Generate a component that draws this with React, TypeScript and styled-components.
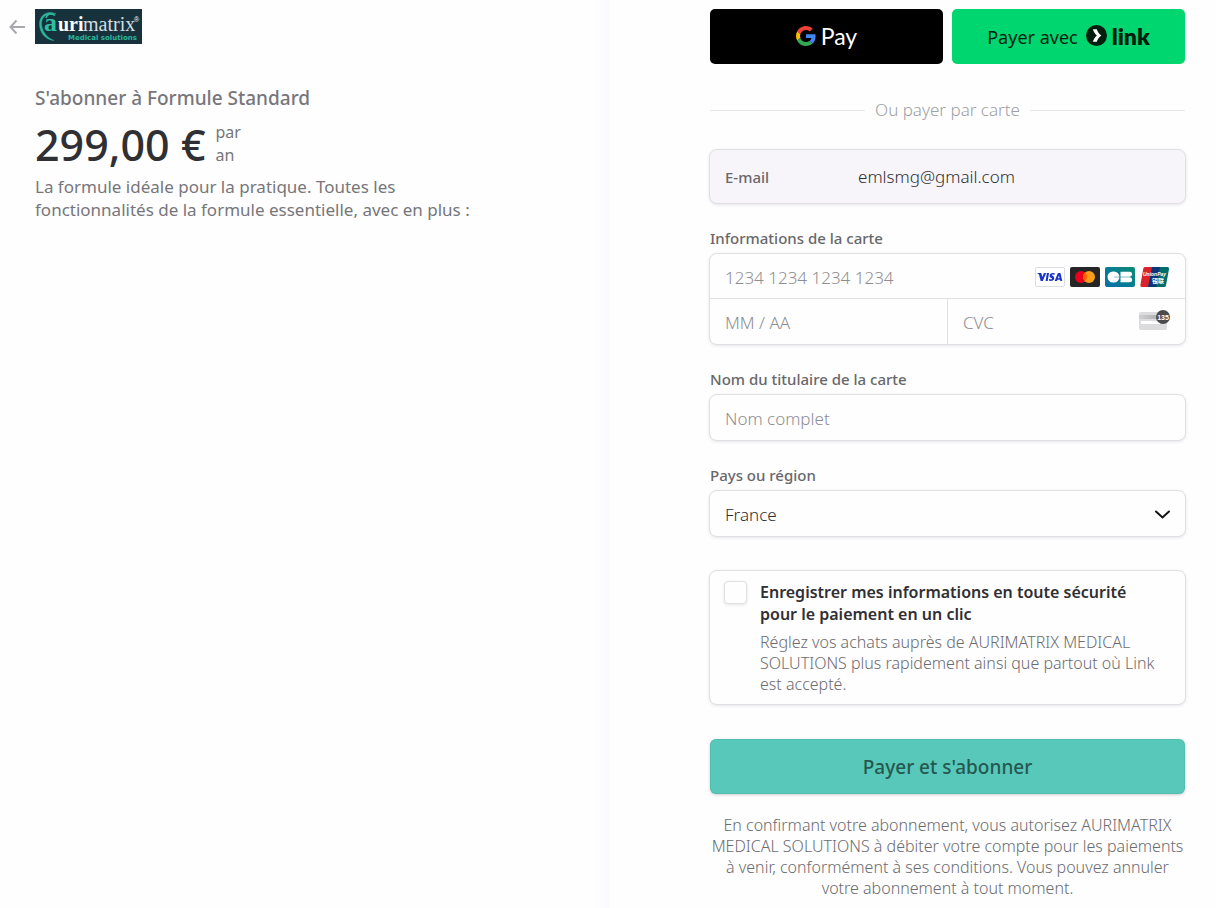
import React from "react";
import styled, { createGlobalStyle } from "styled-components";

const GlobalStyle = createGlobalStyle`
  *, *::before, *::after { box-sizing: border-box; }
  body {
    margin: 0;
    background: #fefefe;
    color: #302f33;
    font-family: "Noto Sans", "Open Sans", sans-serif;
    font-size: 16px;
  }
  button, input, select { font-family: inherit; font-size: inherit; color: inherit; }
  h1, p { margin: 0; }
`;

const Page = styled.div`
  display: flex;
  min-height: 100vh;
`;

const Summary = styled.section`
  width: calc(50% + 2px);
  padding: 9px 18px 9px 9px;
  background: linear-gradient(to left, #fbfafd, #fefefe 18px);
`;

const Header = styled.header`
  display: flex;
  align-items: center;
  gap: 10px;
`;

const BackLink = styled.a`
  display: flex;
`;

const Offer = styled.div`
  padding: 42px 0 0 26px;
  color: #77767b;
`;

const OfferTitle = styled.h1`
  font-size: 19px;
  line-height: 24px;
  font-weight: 500;
`;

const PriceRow = styled.div`
  display: flex;
  align-items: center;
  gap: 10px;
  margin-top: 10px;
`;

const Price = styled.span`
  color: #302f33;
  padding-top: 2px;
  font-size: 43px;
  line-height: 46px;
  font-weight: 500;
`;

const Interval = styled.span`
  width: 32px;
  font-size: 16px;
  line-height: 23px;
`;

const Description = styled.p`
  max-width: 450px;
  margin-top: 7px;
  font-size: 17px;
  line-height: 23px;
`;

const Payment = styled.main`
  flex: 1;
  min-width: 0;
  padding: 9px 30px 9px 99px;
`;

const Express = styled.div`
  display: flex;
  gap: 9px;
  padding: 0 1px;
`;

const ExpressButton = styled.button<{ $bg: string; $fg: string }>`
  flex: 1;
  display: flex;
  align-items: center;
  justify-content: center;
  gap: 8px;
  height: 55px;
  padding: 0;
  border: 0;
  border-radius: 5px;
  background: ${(p) => p.$bg};
  color: ${(p) => p.$fg};
  font-size: 18px;
`;

const Wordmark = styled.span<{ $weight: number; $size: number }>`
  font-family: Lato, sans-serif;
  font-size: ${(p) => p.$size}px;
  line-height: 24px;
  font-weight: ${(p) => p.$weight};
`;

const Brand = styled.span`
  display: flex;
  align-items: center;
  gap: 5px;
  padding-bottom: 2px;
`;

const Divider = styled.div`
  display: flex;
  align-items: center;
  gap: 10px;
  margin: 34px 1px 27px;
  color: #a09fa3;
  font-size: 17px;
  line-height: 24px;
  font-weight: 300;
  &::before, &::after {
    content: "";
    flex: 1;
    height: 1px;
    background: #e8e7ea;
  }
`;

const Box = styled.div<{ $filled?: boolean }>`
  border: 1px solid #e0dfe3;
  border-radius: 8px;
  background: ${(p) => (p.$filled ? "#f7f5f9" : "#fefefe")};
  box-shadow: 0 1px 3px rgba(60, 50, 80, 0.12);
`;

const EmailBox = styled(Box)`
  display: flex;
  align-items: center;
  height: 55px;
  padding: 0 15px;
`;

const EmailLabel = styled.label`
  width: 133px;
  color: #68676b;
  font-size: 15px;
  font-weight: 500;
`;

const TextInput = styled.input`
  flex: 1;
  min-width: 0;
  width: 100%;
  height: 100%;
  padding: 0;
  border: 0;
  background: transparent;
  outline: none;
  font-size: 17px;
  font-weight: 300;
  &::placeholder { color: #8e8d91; opacity: 1; }
`;

const Label = styled.label`
  display: block;
  margin: 24px 1px 5px;
  color: #68676b;
  font-size: 15px;
  line-height: 20px;
  font-weight: 500;
`;

const CardRow = styled.div`
  display: flex;
  height: 44px;
  & + & {
    height: 46px;
    border-top: 1px solid #e0dfe3;
  }
`;

const Cell = styled.div`
  flex: 1;
  display: flex;
  align-items: center;
  padding: 2px 15px 0;
  & + & { border-left: 1px solid #e0dfe3; }
`;

const Brands = styled.div`
  display: flex;
  gap: 5px;
`;

const Field = styled(Box)`
  position: relative;
  height: 47px;
  padding: 2px 15px 0;
`;

const Select = styled.select`
  width: 100%;
  height: 100%;
  padding: 0;
  border: 0;
  outline: none;
  appearance: none;
  background: transparent;
  font-size: 17px;
  font-weight: 300;
`;

const Chevron = styled.svg`
  position: absolute;
  right: 14px;
  top: 14px;
  pointer-events: none;
`;

const SaveBox = styled(Box)`
  display: flex;
  align-items: flex-start;
  gap: 13px;
  margin-top: 33px;
  padding: 10px 20px 9px 14px;
`;

const Checkbox = styled.input`
  flex: none;
  appearance: none;
  width: 23px;
  height: 23px;
  margin: 0;
  border: 1px solid #e0dfe3;
  border-radius: 4px;
  background: #fefefe;
  box-shadow: 0 1px 3px rgba(60, 50, 80, 0.12);
`;

const SaveText = styled.label`
  font-size: 16px;
  line-height: 22px;
  font-weight: 600;
`;

const SaveHint = styled.span`
  display: block;
  margin-top: 7px;
  color: #6c6b70;
  font-size: 16px;
  line-height: 21px;
  font-weight: 300;
`;

const Submit = styled.button`
  display: block;
  width: calc(100% - 2px);
  height: 55px;
  margin: 34px 1px 21px;
  border: 0;
  border-radius: 6px;
  background: #57c8b9;
  color: #25584f;
  font-size: 19px;
  font-weight: 500;
  box-shadow: inset 0 0 0 1px rgba(40, 120, 110, 0.12), 0 1px 3px rgba(60, 50, 80, 0.25);
`;

const Terms = styled.p`
  color: #6c6b70;
  font-size: 16px;
  line-height: 21px;
  font-weight: 300;
  text-align: center;
`;

const BrandLogo = () => (
  <svg width="107" height="35" viewBox="0 0 107 35" role="img" aria-label="Aurimatrix Medical solutions">
    <rect width="107" height="35" fill="#17323d" />
    <path d="M21 5C14 1 5 5 4.500 14C4 23 10 31 19 31.500C12 29 6.500 22 6.500 14C7 7 13 3.500 21 5Z" fill="#2bb59a" stroke="#2bb59a" strokeWidth=".4" />
    <text x="9" y="22" fontFamily="Liberation Serif, serif" fontWeight="700" fontSize="26" fill="#2fc0a3">a</text>
    <path d="M11 9C12 5 16 3.500 20 6.500" fill="none" stroke="#2fc0a3" strokeWidth="1.500" />
    <text x="23" y="22" fontFamily="Liberation Serif, serif" fontWeight="700" fontSize="20" fill="#ffffff">uri</text>
    <text x="48" y="22" fontFamily="Liberation Serif, serif" fontSize="20" fill="#d5dde0">matrix</text>
    <text x="99" y="13" fontFamily="Liberation Sans, sans-serif" fontSize="7" fill="#ffffff">®</text>
    <text x="33" y="31" fontFamily="DejaVu Sans, sans-serif" fontWeight="700" fontSize="7" fill="#2bb59a">Medical solutions</text>
  </svg>
);

const GoogleG = () => (
  <svg width="20" height="20" viewBox="0 0 48 48" aria-hidden="true">
    <path fill="#EA4335" d="M24 9.500c3.540 0 6.710 1.220 9.210 3.600l6.850-6.850C35.900 2.380 30.470 0 24 0 14.620 0 6.510 5.380 2.560 13.220l7.980 6.190C12.430 13.720 17.740 9.500 24 9.500z" />
    <path fill="#4285F4" d="M46.980 24.550c0-1.570-.15-3.090-.38-4.550H24v9.020h12.940c-.58 2.960-2.260 5.480-4.780 7.180l7.730 6c4.510-4.180 7.090-10.360 7.090-17.650z" />
    <path fill="#FBBC05" d="M10.530 28.590c-.48-1.450-.76-2.990-.76-4.590s.27-3.140.76-4.590l-7.980-6.190C.92 16.460 0 20.120 0 24c0 3.880.92 7.540 2.560 10.780l7.970-6.190z" />
    <path fill="#34A853" d="M24 48c6.480 0 11.930-2.130 15.890-5.810l-7.730-6c-2.150 1.450-4.920 2.300-8.160 2.300-6.260 0-11.570-4.220-13.470-9.910l-7.980 6.190C6.510 42.620 14.620 48 24 48z" />
  </svg>
);

const LinkMark = () => (
  <svg width="21" height="21" viewBox="0 0 21 21" aria-hidden="true">
    <circle cx="10.500" cy="10.500" r="10.500" fill="#011e0f" />
    <path d="M6.800 4.200h4c.7 2.500 2.300 4.800 4.600 6.300-2.300 1.500-3.900 3.800-4.600 6.300h-4c.8-2.600 2.300-4.800 4.100-6.300-1.800-1.500-3.300-3.700-4.100-6.300z" fill="#fefefe" />
  </svg>
);

const Visa = () => (
  <svg width="30" height="20" viewBox="0 0 30 20" role="img" aria-label="Visa">
    <rect x=".5" y=".5" width="29" height="19" rx="1.500" fill="#fff" stroke="#dcdce4" />
    <path fill="#1a34c8" d="M2.600 6h3.100c.5 0 .8.200.9.700l.6 3.300L9 6h2.200l-3.400 8H5.600L4 7.600c-.4-.6-.9-.9-1.500-1.100zM11.900 6h2.100l-1.300 8h-2.100zM19.700 6.300l-.3 1.700c-1.200-.6-2.600-.5-2.600.1 0 .8 2.500 1 2.500 3.100 0 2.600-3.200 3.300-5.400 2.400l.3-1.800c1.400.8 2.900.6 2.900 0 0-.9-2.500-.9-2.500-3.100 0-2.300 2.800-3.300 5.100-2.400zM23.500 6h1.900L27.300 14h-2l-.3-1.200h-2.600l-.5 1.200h-2.200l2.800-7.200c.2-.5.500-.8 1-.8zm.4 2.500-1 2.800h1.600z" />
  </svg>
);

const Mastercard = () => (
  <svg width="30" height="20" viewBox="0 0 30 20" role="img" aria-label="Mastercard">
    <rect width="30" height="20" rx="2" fill="#252525" />
    <circle cx="11" cy="10" r="6" fill="#eb001b" />
    <circle cx="19" cy="10" r="6" fill="#f79e1b" />
    <path d="M15 5.530a6 6 0 0 1 0 8.940 6 6 0 0 1 0-8.940z" fill="#ff5f00" />
  </svg>
);

const CartesBancaires = () => (
  <svg width="30" height="20" viewBox="0 0 30 20" role="img" aria-label="Cartes Bancaires">
    <defs>
      <linearGradient id="cb" x1="0" y1="1" x2="1" y2="0">
        <stop offset="0" stopColor="#0b6fa8" />
        <stop offset=".5" stopColor="#057d92" />
        <stop offset="1" stopColor="#108a72" />
      </linearGradient>
    </defs>
    <rect width="30" height="20" rx="2" fill="url(#cb)" />
    <path d="M14.500 9.700H9.200v.6h5.300A5.600 5.600 0 0 1 9 15.500H8a5.500 5.500 0 0 1 0-11H9a5.600 5.600 0 0 1 5.500 5.200z" fill="#fff" />
    <path d="M15.500 4.700h9.100a2.500 2.500 0 0 1 0 5h-9.100zM15.500 10.300h9.100a2.500 2.500 0 0 1 0 5h-9.100z" fill="#fff" />
  </svg>
);

const UnionPay = () => (
  <svg width="30" height="20" viewBox="0 0 30 20" role="img" aria-label="UnionPay">
    <path d="M5 0h8L9 20H2Q0 20 .4 18L3.300 1.500Q3.600 0 5 0z" fill="#d9222a" />
    <path d="M12 0h9l-4 20H8z" fill="#0c3479" />
    <path d="M20 0h7.500Q29.400 0 29 2l-3 16.500Q25.700 20 24 20h-8z" fill="#026c68" />
    <text x="3" y="9" fontFamily="Liberation Sans, sans-serif" fontStyle="italic" fontWeight="700" fontSize="5" fill="#fff">UnionPay</text>
    <text x="12" y="16" fontFamily="Noto Sans CJK SC, sans-serif" fontWeight="700" fontSize="6" fill="#fff">银联</text>
  </svg>
);

const CvcIcon = () => (
  <svg width="31" height="26" viewBox="0 0 31 26" aria-hidden="true">
    <defs>
      <linearGradient id="stripe" x1="0" y1="0" x2="1" y2="0">
        <stop offset="0" stopColor="#d0cfd1" />
        <stop offset="1" stopColor="#a09fa2" />
      </linearGradient>
    </defs>
    <rect x="0" y="2" width="28" height="18" rx="2" fill="#dcdbdd" />
    <rect x="0" y="5" width="28" height="4" fill="url(#stripe)" />
    <rect x="2" y="11" width="19" height="3" fill="#fff" />
    <circle cx="24" cy="7" r="7" fill="#4b4a4c" />
    <text x="24" y="10" textAnchor="middle" fontFamily="Liberation Sans, sans-serif" fontWeight="700" fontSize="7" fill="#fff">135</text>
  </svg>
);

export default function App() {
  return (
    <>
      <GlobalStyle />
      <Page>
        <Summary>
          <Header>
            <BackLink href="#" aria-label="Retour">
              <svg width="16" height="16" viewBox="0 0 16 16" fill="none" stroke="#a9a8ac" strokeWidth="2">
                <path d="M7.500 1.500 1.500 8l6 6.500M2 8h14" />
              </svg>
            </BackLink>
            <BrandLogo />
          </Header>
          <Offer>
            <OfferTitle>S'abonner à Formule Standard</OfferTitle>
            <PriceRow>
              <Price>299,00&nbsp;€</Price>
              <Interval>par an</Interval>
            </PriceRow>
            <Description>
              La formule idéale pour la pratique. Toutes les fonctionnalités de la formule essentielle, avec en plus :
            </Description>
          </Offer>
        </Summary>
        <Payment>
          <Express>
            <ExpressButton type="button" $bg="#000000" $fg="#ffffff">
              <Brand>
                <GoogleG />
                <Wordmark $weight={400} $size={23}>Pay</Wordmark>
              </Brand>
            </ExpressButton>
            <ExpressButton type="button" $bg="#00d66f" $fg="#011e0f">
              <span>Payer avec</span>
              <Brand>
                <LinkMark />
                <Wordmark $weight={800} $size={23}>link</Wordmark>
              </Brand>
            </ExpressButton>
          </Express>
          <Divider>Ou payer par carte</Divider>
          <EmailBox $filled>
            <EmailLabel htmlFor="email">E-mail</EmailLabel>
            <TextInput id="email" type="email" readOnly value="emlsmg@gmail.com" />
          </EmailBox>
          <Label htmlFor="number">Informations de la carte</Label>
          <Box>
            <CardRow>
              <Cell>
                <TextInput id="number" placeholder="1234 1234 1234 1234" />
                <Brands>
                  <Visa />
                  <Mastercard />
                  <CartesBancaires />
                  <UnionPay />
                </Brands>
              </Cell>
            </CardRow>
            <CardRow>
              <Cell>
                <TextInput aria-label="Date d'expiration" placeholder="MM / AA" />
              </Cell>
              <Cell>
                <TextInput aria-label="CVC" placeholder="CVC" />
                <CvcIcon />
              </Cell>
            </CardRow>
          </Box>
          <Label htmlFor="name">Nom du titulaire de la carte</Label>
          <Field>
            <TextInput id="name" placeholder="Nom complet" />
          </Field>
          <Label htmlFor="country">Pays ou région</Label>
          <Field>
            <Select id="country" defaultValue="France">
              <option>France</option>
            </Select>
            <Chevron width="18" height="18" viewBox="0 0 18 18" fill="none" stroke="#111" strokeWidth="2">
              <path d="M3 6.500 9.500 12.500 16 6.500" strokeLinecap="round" />
            </Chevron>
          </Field>
          <SaveBox>
            <Checkbox id="save" type="checkbox" />
            <SaveText htmlFor="save">
              Enregistrer mes informations en toute sécurité pour le paiement en un clic
              <SaveHint>
                Réglez vos achats auprès de AURIMATRIX MEDICAL SOLUTIONS plus rapidement ainsi que partout où Link est
                accepté.
              </SaveHint>
            </SaveText>
          </SaveBox>
          <Submit type="submit">Payer et s'abonner</Submit>
          <Terms>
            En confirmant votre abonnement, vous autorisez AURIMATRIX MEDICAL SOLUTIONS à débiter votre compte pour les
            paiements à venir, conformément à ses conditions. Vous pouvez annuler votre abonnement à tout moment.
          </Terms>
        </Payment>
      </Page>
    </>
  );
}
